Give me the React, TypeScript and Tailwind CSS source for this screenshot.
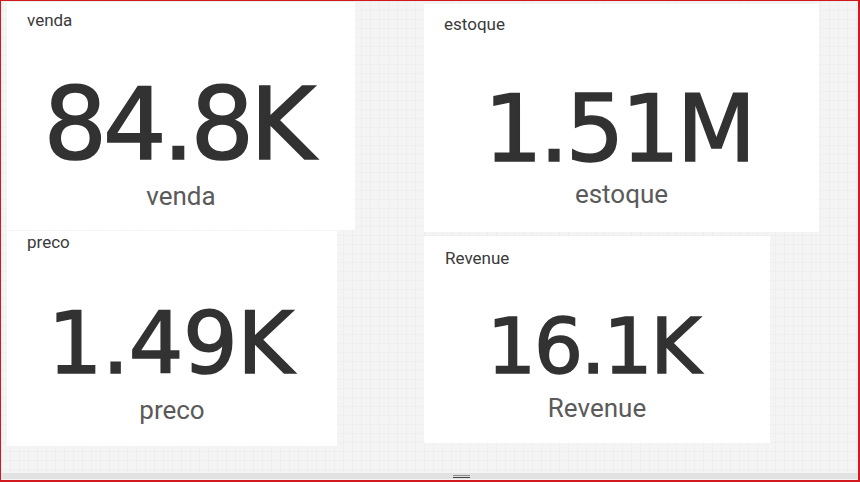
import React from 'react';

type Kpi = {
  title: string;
  value: string;
  box: string;
  head: string;
  num: string;
  label: string;
};

const left: Kpi[] = [
  {
    title: 'venda',
    value: '84.8K',
    box: 'mt-px w-[348px] h-[228px] pt-[8px]',
    head: 'pl-[20px]',
    num: 'mt-[45px] pr-[7px] text-[100px] tracking-[-4px]',
    label: 'mt-[8px]',
  },
  {
    title: 'preco',
    value: '1.49K',
    box: 'mt-px w-[330px] h-[215px] pt-[1px]',
    head: 'pl-[20px]',
    num: 'mt-[48px] pr-[3px] text-[86px] tracking-[-0.5px]',
    label: 'mt-[11px]',
  },
];

const right: Kpi[] = [
  {
    title: 'estoque',
    value: '1.51M',
    box: 'mt-[3px] w-[395px] h-[228px] pt-[10px]',
    head: 'pl-[20px]',
    num: 'mt-[50px] pr-[6px] text-[92px] tracking-[-3px]',
    label: 'mt-[5px]',
  },
  {
    title: 'Revenue',
    value: '16.1K',
    box: 'mt-[4px] w-[346px] h-[207px] pt-[12px]',
    head: 'pl-[21px]',
    num: 'mt-[40px] pr-[8px] text-[77px] tracking-[-2px]',
    label: 'mt-[10px]',
  },
];

const Card = ({ kpi }: { kpi: Kpi }) => (
  <div className={`bg-white flex flex-col ${kpi.box}`}>
    <div className={`text-[17px] leading-[20px] text-[#3a3a3a] ${kpi.head}`}>{kpi.title}</div>
    <div
      className={`leading-none text-center text-[#323232] [-webkit-text-stroke:1.6px_#323232] font-['DejaVu_Sans','Liberation_Sans',sans-serif] ${kpi.num}`}
    >
      {kpi.value}
    </div>
    <div className={`text-[26px] leading-none text-center text-[#5a5a5a] ${kpi.label}`}>{kpi.title}</div>
  </div>
);

export default function App() {
  return (
    <div className="w-[860px] h-[482px] flex flex-col overflow-hidden border-solid border-[#d2191f] border-t border-l border-r-2 border-b-2 bg-[#f4f4f4] font-['Roboto','Liberation_Sans',sans-serif]">
      <div className="flex-1 flex bg-[linear-gradient(to_right,rgba(0,0,0,0.018)_1px,transparent_1px),linear-gradient(to_bottom,rgba(0,0,0,0.018)_1px,transparent_1px)] bg-[size:9px_9px]">
        <div className="pl-[6px] flex flex-col">
          {left.map((k) => (
            <Card key={k.title} kpi={k} />
          ))}
        </div>
        <div className="ml-[69px] flex flex-col">
          {right.map((k) => (
            <Card key={k.title} kpi={k} />
          ))}
        </div>
      </div>
      <div className="h-[6px] mb-px bg-[#e2e2e2] flex justify-center">
        <div className="ml-[64px] mt-[2px] w-[17px] flex flex-col gap-px">
          <div className="h-px bg-[#8a8a8a]" />
          <div className="h-px bg-[#444]" />
        </div>
      </div>
    </div>
  );
}
